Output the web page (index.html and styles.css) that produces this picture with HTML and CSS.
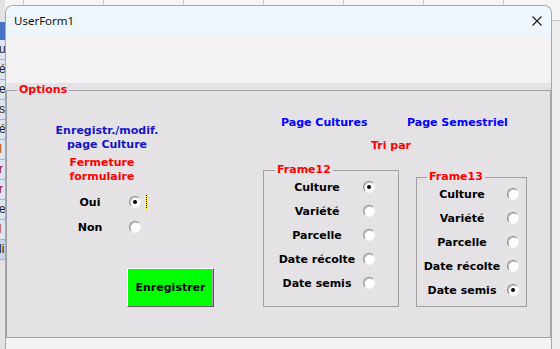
FILE: index.html
```html
<!DOCTYPE html>
<html>

<head>
    <meta charset="UTF-8">
    <title>UserForm1</title>
    <link rel="stylesheet" href="styles.css">
</head>

<body>
    <div class="desk">
        <div class="sheet">
            <div class="hd"></div>
            <div class="cell">u</div>
            <div class="cell">é</div>
            <div class="cell">e</div>
            <div class="cell">s</div>
            <div class="cell">é</div>
            <div class="cell brown">I</div>
            <div class="cell dark">r</div>
            <div class="cell dark">r</div>
            <div class="cell">e</div>
            <div class="cell brown">l</div>
            <div class="cell sel">li</div>
        </div>

        <div class="win">
            <div class="titlebar">
                <span class="title">UserForm1</span>
                <svg class="close" width="10" height="10" viewBox="0 0 10 10">
                    <path d="M0.5 0.5 L9.5 9.5 M9.5 0.5 L0.5 9.5" stroke="#1b1b1b" stroke-width="1.1" fill="none" />
                </svg>
            </div>
            <div class="band"></div>
            <div class="client">
                <fieldset class="frame options">
                    <legend>Options</legend>
                    <div class="cols">
                        <div class="left">
                            <p class="note blue-note">Enregistr./modif.<br>page Culture</p>
                            <p class="note red-note">Fermeture<br>formulaire</p>
                            <div class="opt-row">
                                <span class="lbl">Oui</span>
                                <span class="radio on"></span>
                                <span class="focus"></span>
                            </div>
                            <div class="opt-row">
                                <span class="lbl">Non</span>
                                <span class="radio"></span>
                            </div>
                            <button class="save">Enregistrer</button>
                        </div>

                        <div class="right">
                            <div class="links">
                                <span class="link first">Page Cultures</span>
                                <span class="link">Page Semestriel</span>
                            </div>
                            <div class="sort">Tri par</div>
                            <div class="frames">
                                <fieldset class="frame f12">
                                    <legend>Frame12</legend>
                                    <div class="rows">
                                        <div class="choice"><span class="lbl">Culture</span><span class="radio on"></span></div>
                                        <div class="choice"><span class="lbl">Variété</span><span class="radio"></span></div>
                                        <div class="choice"><span class="lbl">Parcelle</span><span class="radio"></span></div>
                                        <div class="choice"><span class="lbl">Date récolte</span><span class="radio"></span></div>
                                        <div class="choice"><span class="lbl">Date semis</span><span class="radio"></span></div>
                                    </div>
                                </fieldset>
                                <fieldset class="frame f13">
                                    <legend>Frame13</legend>
                                    <div class="rows">
                                        <div class="choice"><span class="lbl">Culture</span><span class="radio"></span></div>
                                        <div class="choice"><span class="lbl">Variété</span><span class="radio"></span></div>
                                        <div class="choice"><span class="lbl">Parcelle</span><span class="radio"></span></div>
                                        <div class="choice"><span class="lbl">Date récolte</span><span class="radio"></span></div>
                                        <div class="choice"><span class="lbl">Date semis</span><span class="radio on"></span></div>
                                    </div>
                                </fieldset>
                            </div>
                        </div>
                    </div>
                </fieldset>
            </div>
            <div class="foot"></div>
        </div>

        <div class="edge"></div>
    </div>
</body>

</html>
```

FILE: styles.css
```css
* {
    margin: 0;
    padding: 0;
    box-sizing: border-box;
}

body {
    width: 560px;
    height: 349px;
    overflow: hidden;
    background-color: #f4f4f4;
    background-image: linear-gradient(90deg, transparent 79px, #c6c6c6 79px, #c6c6c6 80px);
    background-size: 80px 5px;
    background-position: 24px 0;
    background-repeat: repeat-x;
    font-family: "DejaVu Sans", Verdana, sans-serif;
    font-size: 11px;
    font-weight: bold;
}

.desk {
    display: flex;
    height: 349px;
}

/* spreadsheet peeking out on the left */
.sheet {
    flex: none;
    width: 5px;
    overflow: hidden;
    padding-top: 22px;
    background-color: #e3e3e3;
    font-family: "Liberation Sans", Arial, sans-serif;
    font-weight: normal;
    font-size: 12px;
}

.sheet .hd {
    height: 18px;
    background-color: #4472c4;
}

.sheet .cell {
    height: 20px;
    line-height: 19px;
    border-bottom: 1px solid #9db3da;
    background-color: #dce5f1;
    white-space: nowrap;
    text-indent: -1px;
    color: #222;
}

.sheet .brown {
    color: #b8590e;
}

.sheet .dark {
    color: #9c1010;
}

.sheet .sel {
    background-color: #c5d4ea;
}

/* window */
.win {
    flex: none;
    width: 547px;
    height: 344px;
    margin-top: 5px;
    border: 1px solid #a8a8a8;
    border-bottom: 0;
    border-radius: 8px 8px 0 0;
    overflow: hidden;
    display: flex;
    flex-direction: column;
    background-color: #f4f2f5;
}

.titlebar {
    flex: none;
    height: 29px;
    display: flex;
    align-items: center;
    justify-content: space-between;
    padding: 0 9px 0 8px;
    background-color: #eef5fc;
}

.title {
    font-family: "Noto Sans", "Open Sans", sans-serif;
    font-weight: normal;
    font-size: 11.5px;
    color: #111;
}

.band {
    flex: none;
    height: 48px;
    background-color: #f4f2f5;
}

.client {
    flex: none;
    height: 255px;
    background-color: #e4e2e5;
}

.foot {
    flex: 1;
    background-color: #f4f2f5;
}

.edge {
    flex: 1;
    margin-top: 20px;
    border-top: 1px solid #c4c4c4;
    background-color: #ededed;
}

/* frames */
.frame {
    border: 1px solid #a0a0a0;
    min-width: 0;
}

.frame legend {
    color: #ff0000;
    line-height: 12px;
    padding: 0 2px;
}

.options {
    height: 255px;
}

.options legend {
    margin-left: 10px;
    line-height: 14px;
}

.cols {
    display: flex;
}

.left {
    width: 256px;
    padding-top: 27px;
}

.note {
    line-height: 14px;
    text-align: center;
}

.blue-note {
    width: 200px;
    color: #1616c6;
}

.red-note {
    width: 190px;
    margin-top: 4px;
    color: #ff0000;
}

.opt-row {
    display: flex;
    align-items: center;
    height: 24px;
    margin-top: 1px;
}

.opt-row:first-of-type {
    margin-top: 6px;
}

.opt-row .lbl {
    width: 40px;
    margin-left: 63px;
    text-align: center;
    color: #000;
}

.opt-row .radio {
    margin-left: 19px;
}

.focus {
    width: 1px;
    height: 14px;
    margin-left: 5px;
    background: repeating-linear-gradient(#000 0, #000 1px, #f2e600 1px, #f2e600 2px);
}

.save {
    display: block;
    width: 87px;
    height: 39px;
    margin: 29px 0 0 120px;
    background-color: #00ff00;
    border: 1px solid;
    border-color: #ffffff #5c5c5c #5c5c5c #ffffff;
    box-shadow: inset -1px -1px 0 #a0a0a0;
    font-family: inherit;
    font-size: 11px;
    font-weight: bold;
    color: #000;
}

.right {
    padding-top: 19px;
}

.links {
    display: flex;
    padding-left: 18px;
    line-height: 14px;
    color: #0000ff;
}

.link.first {
    width: 126px;
}

.sort {
    margin-top: 9px;
    padding-left: 108px;
    line-height: 14px;
    color: #ff0000;
}

.frames {
    display: flex;
    align-items: flex-end;
    gap: 17px;
    margin-top: 10px;
}

.rows {
    margin-top: -2px;
}

.choice {
    display: flex;
    align-items: center;
    height: 24px;
}

.choice .lbl {
    text-align: center;
    color: #000;
    white-space: nowrap;
}

.choice .radio {
    margin-left: 4px;
}

.f12 {
    width: 136px;
    padding: 0 0 11px 11px;
}

.f12 legend {
    margin-left: 0;
}

.f12 .lbl {
    width: 84px;
}

.f13 {
    width: 111px;
    padding: 0 0 4px 4px;
}

.f13 legend {
    margin-left: 6px;
}

.f13 .lbl {
    width: 82px;
}

/* classic radio button */
.radio {
    position: relative;
    flex: none;
    width: 12px;
    height: 12px;
    border-radius: 50%;
    border: 1px solid;
    border-color: #8a8a8a #f4f4f4 #f4f4f4 #8a8a8a;
    background-color: #ffffff;
    box-shadow: inset 1px 1px 0 #cfcfcf;
}

.radio.on::after {
    content: "";
    position: absolute;
    left: 3px;
    top: 3px;
    width: 4px;
    height: 4px;
    border-radius: 50%;
    background-color: #000;
}
```
